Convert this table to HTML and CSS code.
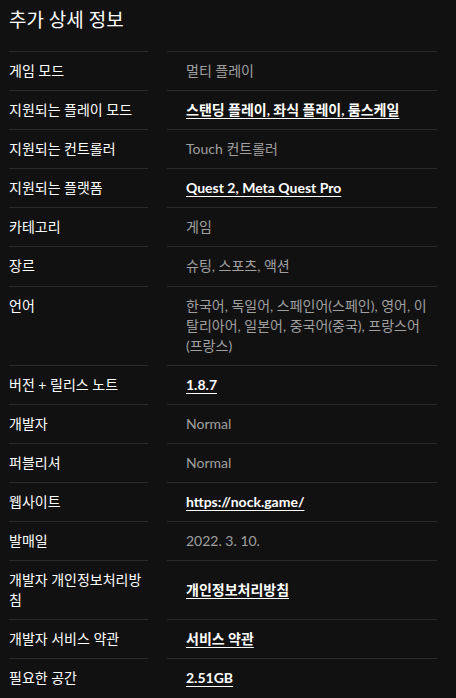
FILE: index.html
```html
<!DOCTYPE html>
<html lang="ko">
<head>
    <meta charset="utf-8">
    <title>추가 상세 정보</title>
    <link rel="stylesheet" href="styles.css">
</head>
<body>
    <div class="details">
        <h2>추가 상세 정보</h2>
        <dl class="info">
            <dt>게임 모드</dt>
            <dd>멀티 플레이</dd>

            <dt>지원되는 플레이 모드</dt>
            <dd><a href="#">스탠딩 플레이, 좌식 플레이, 룸스케일</a></dd>

            <dt>지원되는 컨트롤러</dt>
            <dd>Touch 컨트롤러</dd>

            <dt>지원되는 플랫폼</dt>
            <dd><a href="#">Quest 2, Meta Quest Pro</a></dd>

            <dt>카테고리</dt>
            <dd>게임</dd>

            <dt>장르</dt>
            <dd>슈팅, 스포츠, 액션</dd>

            <dt>언어</dt>
            <dd>한국어, 독일어, 스페인어(스페인), 영어, 이탈리아어, 일본어, 중국어(중국), 프랑스어(프랑스)</dd>

            <dt>버전 + 릴리스 노트</dt>
            <dd><a href="#">1.8.7</a></dd>

            <dt>개발자</dt>
            <dd>Normal</dd>

            <dt>퍼블리셔</dt>
            <dd>Normal</dd>

            <dt>웹사이트</dt>
            <dd><a href="#">https://nock.game/</a></dd>

            <dt>발매일</dt>
            <dd>2022. 3. 10.</dd>

            <dt>개발자 개인정보처리방침</dt>
            <dd class="middle"><a href="#">개인정보처리방침</a></dd>

            <dt>개발자 서비스 약관</dt>
            <dd><a href="#">서비스 약관</a></dd>

            <dt>필요한 공간</dt>
            <dd><a href="#">2.51GB</a></dd>
        </dl>
    </div>
</body>
</html>
```
FILE: styles.css
```css
body {
    margin: 0;
    background-color: #111111;
    color: #ffffff;
    font-family: "Lato", "Noto Sans CJK KR", sans-serif;
}
.details {
    padding: 0 9px;
}
.details h2 {
    margin: 6px 0 18px;
    font-size: 19px;
    line-height: 27px;
    font-weight: normal;
}
.info {
    display: grid;
    grid-template-columns: 139px 270px;
    column-gap: 19px;
    margin: 0;
    font-size: 14px;
    line-height: 20px;
}
.info dt, .info dd {
    margin: 0;
    padding: 9px 0 9.1px;
    border-top: 1px solid #2a2a2a;
}
.info dd {
    padding-left: 19px;
    padding-right: 3px;
    color: #a0a0a0;
}
.info dd.middle {
    display: flex;
    align-items: center;
}
.info a {
    color: #ffffff;
    font-weight: bold;
    text-decoration: underline;
    text-decoration-thickness: 1px;
    text-underline-offset: 3px;
}
```
